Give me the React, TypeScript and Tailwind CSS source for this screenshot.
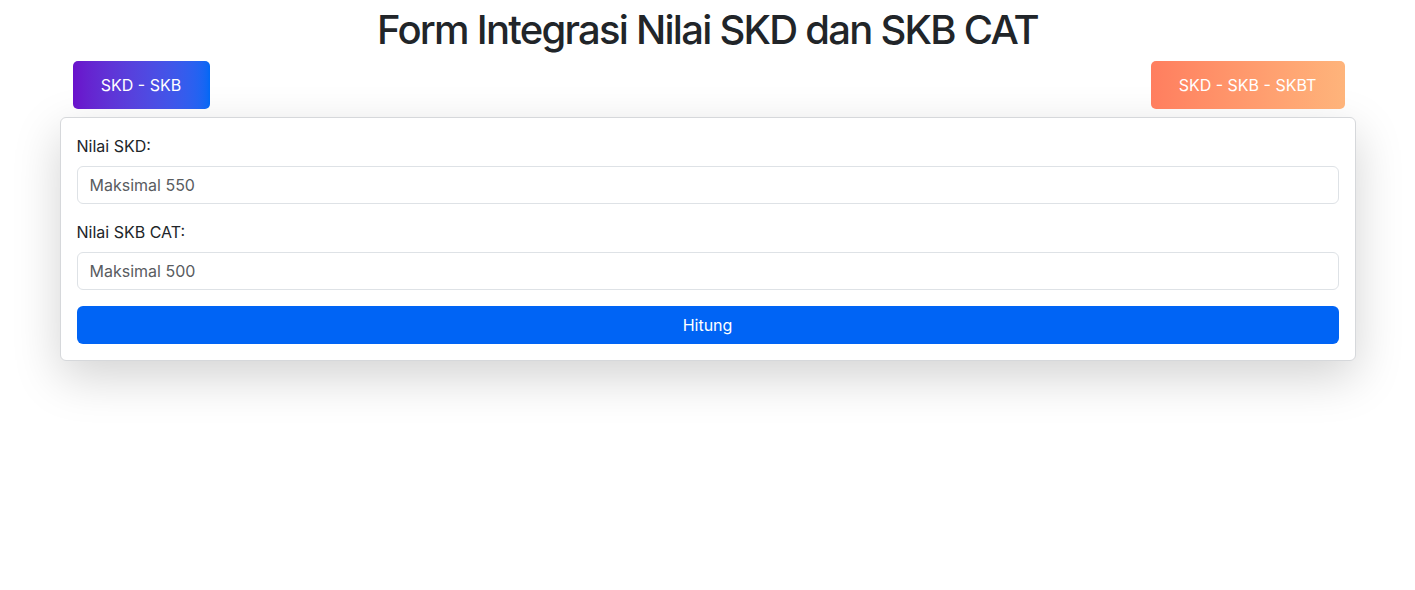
import React from 'react';

const App = () => {
    return (
        <div className="min-h-[590px] bg-white text-[#212529] font-['Inter','Liberation_Sans',sans-serif]">
            <div className="mx-auto w-[1320px] px-3">
                <h1 className="pt-[6px] text-center text-[40px] font-medium leading-[48px] tracking-[-1.75px]">
                    Form Integrasi Nilai SKD dan SKB CAT
                </h1>

                <div className="mt-[7px] flex justify-between px-3">
                    <button className="ml-px h-[48px] w-[137px] rounded-[5px] bg-gradient-to-r from-[#6a11cb] to-[#0068f5] text-base text-white">
                        SKD - SKB
                    </button>
                    <button className="mr-[-1px] h-[48px] w-[194px] rounded-[5px] bg-gradient-to-r from-[#ff7e5f] to-[#feb47b] text-base text-white">
                        SKD - SKB - SKBT
                    </button>
                </div>

                <div className="mt-[8px] rounded-[6px] border border-[#d6d8db] bg-white p-4 shadow-[0_1rem_3rem_rgba(0,0,0,0.175)]">
                    <label className="mb-2 block text-base leading-6">Nilai SKD:</label>
                    <input
                        type="text"
                        placeholder="Maksimal 550"
                        className="mb-4 block h-[38px] w-full rounded-[6px] border border-[#dee2e6] px-3 text-base outline-none placeholder:text-[#595c5f]"
                    />

                    <label className="mb-2 block text-base leading-6">Nilai SKB CAT:</label>
                    <input
                        type="text"
                        placeholder="Maksimal 500"
                        className="mb-4 block h-[38px] w-full rounded-[6px] border border-[#dee2e6] px-3 text-base outline-none placeholder:text-[#595c5f]"
                    />

                    <button className="block h-[38px] w-full rounded-[6px] bg-[#0064f5] text-base text-white">
                        Hitung
                    </button>
                </div>
            </div>
        </div>
    );
};

export default App;
